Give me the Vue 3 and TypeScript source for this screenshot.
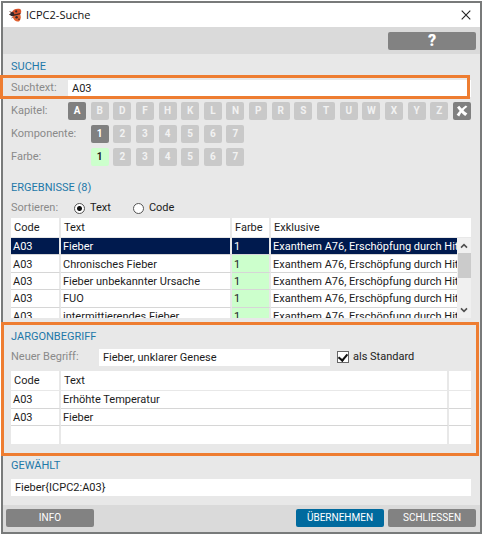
<script setup lang="ts">
import { computed, ref } from 'vue'

interface ResultRow {
  code: string
  text: string
  color: number
  exclusive: string
}

interface JargonRow {
  code: string
  text: string
}

const chapterCodes = ['A', 'B', 'D', 'F', 'H', 'K', 'L', 'N', 'P', 'R', 'S', 'T', 'U', 'W', 'X', 'Y', 'Z']
const numbers = [1, 2, 3, 4, 5, 6, 7]
const exclusive = 'Exanthem A76, Erschöpfung durch Hitze'

const searchText = ref('A03')
const chapter = ref('A')
const component = ref(1)
const color = ref(1)
const sortBy = ref<'text' | 'code'>('text')
const selectedIndex = ref(0)
const newTerm = ref('Fieber, unklarer Genese')
const asDefault = ref(true)

const total = 8
const results: ResultRow[] = [
  'Fieber',
  'Chronisches Fieber',
  'Fieber unbekannter Ursache',
  'FUO',
  'intermittierendes Fieber',
].map((text) => ({ code: 'A03', text, color: 1, exclusive }))

const jargon: JargonRow[] = [
  { code: 'A03', text: 'Erhöhte Temperatur' },
  { code: 'A03', text: 'Fieber' },
  { code: '', text: '' },
]

const chosen = computed(() => {
  const row = results[selectedIndex.value]
  return `${row.text}{ICPC2:${row.code}}`
})
</script>

<template>
  <main class="window">
    <header class="titlebar">
      <svg class="logo" viewBox="0 0 14 14" aria-hidden="true">
        <path d="M1.500 3.500 4 4.500M1 6.500 3.600 6.600M3.500 10 5.500 8.600" stroke="#8a6a60" stroke-width="1" fill="none" />
        <path d="M3.500 5C4.500 1.600 8.500 0 12.500 1.200c1.400 2 .8 4-1 5.200L5 7.600Z" fill="#d8522a" />
        <path d="M4.600 7.400 11.600 5.800c1.800 2 1.600 5.600-.6 7.800-3.600.200-6.200-2.400-6.400-6.200Z" fill="#e0602f" />
        <path d="M5 7.400 12.400 5.600" stroke="#3c2724" stroke-width="1.400" />
        <circle cx="4.200" cy="6.200" r="2.100" fill="#35282b" />
        <circle cx="8.200" cy="3.400" r="1.100" fill="#35282b" />
        <circle cx="8.600" cy="9.200" r="1.200" fill="#35282b" />
        <circle cx="11" cy="11.200" r=".8" fill="#35282b" />
      </svg>
      <h1>ICPC2-Suche</h1>
      <button class="close" type="button" aria-label="Schließen">
        <svg viewBox="0 0 10 10"><path d="M.7.7 9.300 9.300M9.300.7.7 9.300" stroke="#222" stroke-width="1.100" /></svg>
      </button>
    </header>

    <div class="toolbar">
      <button class="action help" type="button">?</button>
    </div>

    <section class="search">
      <h2>SUCHE</h2>
      <div class="field marked">
        <label for="search-text">Suchtext:</label>
        <input id="search-text" v-model="searchText" class="box" type="text" />
      </div>
      <div class="field" role="group" aria-labelledby="lbl-chapter">
        <span id="lbl-chapter" class="label">Kapitel:</span>
        <div class="tiles">
          <button
            v-for="c in chapterCodes"
            :key="c"
            type="button"
            class="tile"
            :class="{ active: c === chapter }"
            @click="chapter = c"
          >{{ c }}</button>
          <button type="button" class="tile active" aria-label="Zurücksetzen" @click="chapter = ''">
            <svg viewBox="0 0 12 12"><path d="M1 2.400 3.200.8C5 3 7.800 6.200 11.400 8.600L9.200 11C6.200 8.800 3.600 5.800 1 2.400Z" fill="#fff" /><path d="M11.400 1.800C8.400 3.600 5.400 7.200 3.200 11.400L.6 9.800C3.400 5.800 6.600 2.600 9.800.4Z" fill="#fff" /></svg>
          </button>
        </div>
      </div>
      <div class="field" role="group" aria-labelledby="lbl-component">
        <span id="lbl-component" class="label">Komponente:</span>
        <div class="tiles short">
          <button
            v-for="n in numbers"
            :key="n"
            type="button"
            class="tile"
            :class="{ active: n === component }"
            @click="component = n"
          >{{ n }}</button>
        </div>
      </div>
      <div class="field" role="group" aria-labelledby="lbl-color">
        <span id="lbl-color" class="label">Farbe:</span>
        <div class="tiles short">
          <button
            v-for="n in numbers"
            :key="n"
            type="button"
            class="tile"
            :class="{ green: n === color }"
            @click="color = n"
          >{{ n }}</button>
        </div>
      </div>
    </section>

    <section class="results">
      <h2>ERGEBNISSE ({{ total }})</h2>
      <div class="sort" role="radiogroup" aria-labelledby="lbl-sort">
        <span id="lbl-sort" class="label">Sortieren:</span>
        <label class="option"><input v-model="sortBy" type="radio" name="sort" value="text" />Text</label>
        <label class="option"><input v-model="sortBy" type="radio" name="sort" value="code" />Code</label>
      </div>
      <div class="list">
        <table class="grid result-grid">
          <colgroup><col class="c-code" /><col class="c-text" /><col class="c-color" /><col /></colgroup>
          <thead>
            <tr><th>Code</th><th>Text</th><th>Farbe</th><th>Exklusive</th></tr>
          </thead>
          <tbody>
            <tr
              v-for="(row, i) in results"
              :key="row.text"
              :class="{ selected: i === selectedIndex }"
              @click="selectedIndex = i"
            >
              <td>{{ row.code }}</td>
              <td>{{ row.text }}</td>
              <td class="green-cell">{{ row.color }}</td>
              <td><div class="clip">{{ row.exclusive }}</div></td>
            </tr>
          </tbody>
        </table>
        <div class="scrollbar" aria-hidden="true">
          <svg viewBox="0 0 8 6"><path d="M1 4.600 4 1.600 7 4.600" fill="none" stroke="#505050" stroke-width="1.600" /></svg>
          <span class="thumb"></span>
          <svg viewBox="0 0 8 6"><path d="M1 1.400 4 4.400 7 1.400" fill="none" stroke="#505050" stroke-width="1.600" /></svg>
        </div>
      </div>
    </section>

    <section class="jargon">
      <h2>JARGONBEGRIFF</h2>
      <div class="field term">
        <label for="new-term">Neuer Begriff:</label>
        <input id="new-term" v-model="newTerm" class="box" type="text" />
        <label class="option"><input v-model="asDefault" type="checkbox" />als Standard</label>
      </div>
      <table class="grid jargon-grid">
        <colgroup><col class="c-code" /><col /><col class="c-tool" /></colgroup>
        <thead>
          <tr><th>Code</th><th>Text</th><th></th></tr>
        </thead>
        <tbody>
          <tr v-for="(row, i) in jargon" :key="i">
            <td>{{ row.code }}</td>
            <td>{{ row.text }}</td>
            <td></td>
          </tr>
        </tbody>
      </table>
    </section>

    <section class="chosen">
      <h2><label for="chosen-code">GEWÄHLT</label></h2>
      <input id="chosen-code" class="box" type="text" readonly :value="chosen" />
    </section>

    <footer class="footer">
      <button class="action info" type="button">INFO</button>
      <button class="action primary" type="button">ÜBERNEHMEN</button>
      <button class="action" type="button">SCHLIESSEN</button>
    </footer>
  </main>
</template>

<style>
body {
  margin: 0;
  background: #fff;
}
</style>

<style scoped>
* {
  box-sizing: border-box;
}

.window {
  margin: 1px;
  border: 2px solid #787a7a;
  background: #e8e8e8;
  color: #1c1c1c;
  font: 11px/16px Roboto, sans-serif;
}

button,
input {
  font: inherit;
  color: inherit;
  margin: 0;
  padding: 0;
  border: 0;
}

h1,
h2 {
  margin: 0;
  font-weight: 400;
}

h2 {
  font-size: 11px;
  line-height: 15px;
  color: #1e78a8;
}

h2 label {
  display: block;
}

.titlebar {
  display: flex;
  align-items: center;
  height: 24px;
  padding: 0 9px 0 5px;
  background: #fff;
}

.titlebar h1 {
  flex: 1;
  margin-left: 4px;
  font: 11px/16px "Open Sans", sans-serif;
  color: #111;
}

.logo {
  width: 14px;
  height: 14px;
}

.close {
  display: flex;
  background: none;
}

.close svg {
  width: 10px;
  height: 10px;
}

.toolbar,
.footer {
  display: flex;
  gap: 4px;
  background: #dadada;
}

.toolbar {
  justify-content: flex-end;
  padding: 5px 4px 4px;
}

.footer {
  padding: 4px 4px 5px 3px;
}

.action {
  width: 88px;
  height: 18px;
  border-radius: 2px;
  background: #828282;
  color: #fff;
  font-size: 10px;
  line-height: 18px;
}

.help {
  font-size: 16px;
  font-weight: 900;
}

.info {
  margin-right: auto;
}

.primary {
  background: #006a9e;
}

.search,
.results,
.jargon,
.chosen {
  padding: 0 9px 0 8px;
}

.search {
  display: flex;
  flex-direction: column;
  gap: 5px;
  padding-top: 5px;
}

.field {
  display: flex;
  align-items: center;
  height: 18px;
}

.label,
.field > label:first-child {
  width: 57px;
  flex: none;
  color: #8a8a8a;
  line-height: 18px;
  white-space: nowrap;
}

.box {
  flex: 1;
  min-width: 0;
  height: 17px;
  padding: 0 4px;
  background: #fff;
  outline: 0;
}

.marked {
  position: relative;
}

.marked::after {
  content: "";
  position: absolute;
  inset: -4px 1px -2px -11px;
  border: 3px solid #ee7d31;
  pointer-events: none;
}

.tiles {
  flex: 1;
  display: grid;
  grid-template-columns: repeat(18, 18px);
  justify-content: space-between;
}

.short .tile:first-child {
  grid-column-start: 2;
}

.tile {
  display: flex;
  align-items: center;
  justify-content: center;
  height: 18px;
  border-radius: 2px;
  background: #c9c9c9;
  color: #f2f2f2;
  font-size: 10px;
  font-weight: 700;
}

.tile svg {
  width: 12px;
  height: 12px;
}

.tile.active {
  background: #808080;
  color: #fff;
}

.tile.green {
  background: #ccffcc;
  color: #222;
}

.results {
  padding-top: 14px;
}

.sort {
  display: flex;
  align-items: center;
  gap: 22px;
  height: 16px;
  margin: 5px 0 2px;
}

.sort .label {
  width: 41px;
}

.option {
  display: flex;
  align-items: center;
  color: #1c1c1c;
}

.option input {
  appearance: none;
  flex: none;
  background: #fff;
}

.option input[type="radio"] {
  width: 11px;
  height: 11px;
  margin-right: 5px;
  border: 1px solid #555;
  border-radius: 50%;
}

.option input[type="radio"]:checked {
  background: radial-gradient(circle, #111 0 2px, #fff 3px);
}

.option input[type="checkbox"] {
  width: 12px;
  height: 12px;
  margin-right: 4px;
  border: 1px solid #666;
}

.option input[type="checkbox"]:checked::before {
  content: "";
  display: block;
  width: 4px;
  height: 7px;
  margin: 0 auto;
  border: solid #111;
  border-width: 0 2px 2px 0;
  transform: rotate(40deg);
}

.list {
  position: relative;
  height: 100px;
  overflow: hidden;
}

.grid {
  width: 100%;
  table-layout: fixed;
  border-collapse: separate;
  border-spacing: 0;
}

.c-code {
  width: 50px;
}

.c-text {
  width: 171px;
}

.c-color {
  width: 39px;
}

.c-tool {
  width: 22px;
}

.grid th,
.grid td {
  padding: 0;
  background: #fff;
  border: 0 solid #e8e8e8;
  border-right-width: 2px;
  font-weight: 400;
  line-height: 16px;
  text-align: left;
  white-space: nowrap;
  overflow: hidden;
}

.grid th:last-child,
.grid td:last-child {
  border-right-width: 0;
}

.grid th {
  height: 20px;
  padding-left: 3px;
  border-bottom-width: 1px;
}

.grid td {
  height: 17px;
  padding: 2px 0 0 2px;
  line-height: 14px;
  border-bottom: 1px solid #d6d6d6;
}

.grid tbody tr:last-child td {
  border-bottom-width: 0;
}

.result-grid {
  height: 107px;
}

.jargon-grid {
  height: 73px;
  margin-top: 5px;
}

.grid td.green-cell {
  background: #ccffcc;
}

.grid .selected td {
  background: #001a4e;
  color: #fff;
}

.clip {
  margin-right: 14px;
  overflow: hidden;
}

.scrollbar {
  position: absolute;
  top: 20px;
  right: 0;
  bottom: 0;
  width: 14px;
  display: flex;
  flex-direction: column;
  align-items: center;
  padding: 5px 0;
  background: #f0f0f0;
}

.scrollbar svg {
  flex: none;
  width: 8px;
  height: 6px;
}

.thumb {
  width: 13px;
  height: 25px;
  margin: 4px 0 auto;
  background: #cbcbcb;
}

.jargon {
  position: relative;
  margin-top: 4px;
  padding-top: 7px;
  padding-bottom: 12px;
}

.jargon::after {
  content: "";
  position: absolute;
  inset: 0 1px 0 -2px;
  border: 3px solid #ee7d31;
  pointer-events: none;
}

.term {
  margin-top: 4px;
}

.term > label:first-child {
  width: 88px;
}

.term .box {
  flex: 0 1 231px;
}

.term .option {
  margin-left: 7px;
}

.chosen {
  display: flex;
  flex-direction: column;
  gap: 6px;
  padding-top: 2px;
  padding-bottom: 9px;
}

.chosen .box {
  flex: none;
}
</style>
